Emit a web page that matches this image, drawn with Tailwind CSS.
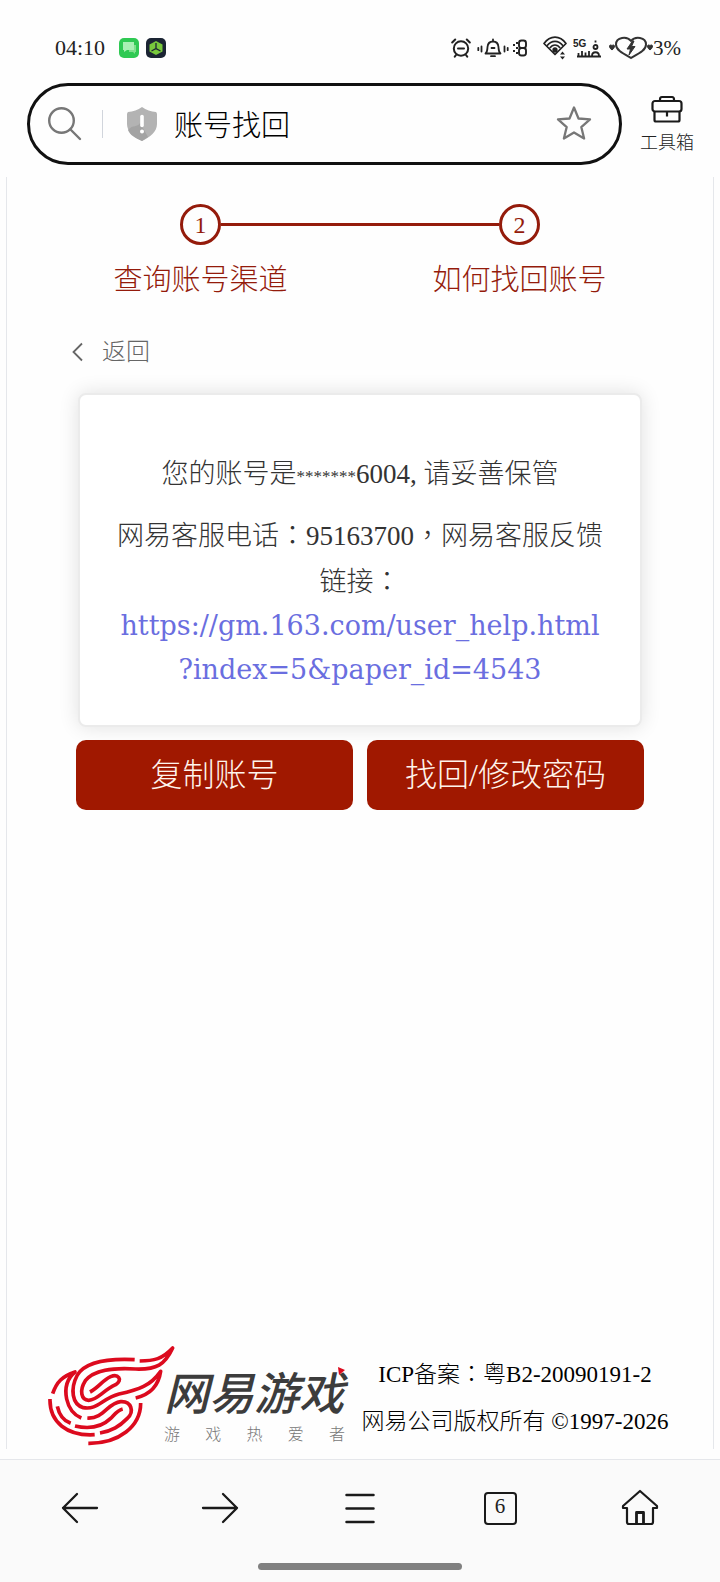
<!DOCTYPE html>
<html lang="zh-CN">
<head>
  <meta charset="UTF-8" />
  <meta name="viewport" content="width=device-width, initial-scale=1.0" />
  <title>账号找回</title>
  <script src="https://cdn.jsdelivr.net/npm/@tailwindcss/browser@4"></script>
</head>
<body class="bg-[#fefefe] text-[#222] font-['Liberation_Serif','Noto_Sans_CJK_SC',serif] font-light min-h-screen flex flex-col">

  <!-- Status bar -->
  <div class="flex items-center justify-between h-7 mt-[34px] pl-[55px] pr-[39px] text-[22px] leading-7">
    <div class="flex items-center">
      <span>04:10</span>
      <svg class="ml-3.5 size-5" viewBox="0 0 20 20">
        <rect width="20" height="20" rx="5" fill="#2fc953" />
        <path d="M4 4h11v8H8l-3 2v-2H4z" fill="#a9f0b4" />
        <path d="M10 12h5V7h2v7h-1v2l-2-2h-4z" fill="#7fe08d" />
      </svg>
      <svg class="ml-[7px] size-5" viewBox="0 0 20 20">
        <rect width="20" height="20" rx="5" fill="#1b2433" />
        <path d="M10 3l6.500 3.500v7L10 17l-6.500-3.500v-7z" fill="#78c83c" />
        <path d="M10 5v5.500l4.500 2.500M10 10.500L5.500 13" fill="none" stroke="#1b2433" stroke-width="1.300" />
      </svg>
    </div>
    <div class="flex items-center text-[21px]">
      <!-- alarm -->
      <svg class="w-5 h-5" viewBox="0 0 20 20" fill="none" stroke="#222" stroke-width="2" stroke-linecap="round">
        <circle cx="10" cy="10.500" r="7.200" />
        <path d="M7 10.500h6M1.200 4.500l3-3M18.800 4.500l-3-3M5 17l-1.200 1.700M15 17l1.200 1.700" />
      </svg>
      <!-- bell -->
      <svg class="ml-1.5 w-8 h-5" viewBox="0 0 32 20" fill="none" stroke="#222" stroke-width="1.800" stroke-linecap="round" stroke-linejoin="round">
        <path d="M8.500 15.500c2-1.500 1.800-4 2-6.500.3-3.500 2.500-5.500 5.500-5.500s5.200 2 5.500 5.500c.2 2.500 0 5 2 6.500zM16 1.500v1.500M14 18.200h4M14.500 10h3M4.500 8.500v5M1.300 9.800v2.400M27.500 8.500v5M30.700 9.800v2.400" />
      </svg>
      <!-- vibrate -->
      <svg class="ml-1 w-3.5 h-5" viewBox="0 0 14 20" fill="none" stroke="#222" stroke-width="1.900">
        <rect x="6" y="2.500" width="7" height="7.500" rx="2.500" />
        <rect x="6" y="10" width="7" height="7.500" rx="2.500" />
        <path d="M0 7h2M3 5h2M3 10h2M0 13h2M3 15h2" />
      </svg>
      <!-- wifi -->
      <svg class="ml-4 w-6 h-6" viewBox="0 0 24 24" fill="none" stroke="#222" stroke-width="1.700" stroke-linejoin="round">
        <path d="M1 7.500C7-1 17-1 23 7.500L12 18.500z" />
        <path d="M4 9.800c4.500-6 11.500-6 16 0M6.800 12c3-4 7.400-4 10.400 0" />
        <circle cx="12" cy="14" r="1.800" fill="#222" />
        <path d="M17 18.500h5l-2.500-3zM17 20.500h5l-2.500 3z" fill="#222" stroke="none" />
      </svg>
      <!-- 5G signal -->
      <svg class="ml-1.5 w-7 h-5" viewBox="0 0 28 20" fill="none" stroke="#222" stroke-width="1.800">
        <text x="0" y="9" font-family="Liberation Sans" font-size="10" font-weight="bold" fill="#222" stroke="none">5G</text>
        <path d="M4 18.500h24M5.500 18v-3M9 18v-5M12.500 18v-3.500M16 18v-5M19 18c0-5 7-5 7 0" />
        <circle cx="22.500" cy="9" r="2" />
        <path d="M22.500 2.500v2" />
      </svg>
      <!-- heart battery -->
      <svg class="ml-2 w-11 h-6" viewBox="0 0 44 24">
        <path d="M22 22C13 17 7 14 7 8.500 7 1 18 0 22 5c4-5 15-4 15 3.500C37 14 31 17 22 22z" fill="none" stroke="#333" stroke-width="2" />
        <path d="M23.500 5L18 13h3.500L20 19l6-8.500h-3.500L25 5z" fill="#333" stroke="#333" />
        <path d="M3 14C0 12 0 9 1.500 9S3 10 3 10s0-1 1.500-1S6 12 3 14zM41 14c-3-2-3-5-1.500-5S41 10 41 10s0-1 1.500-1 1.500 3-1.500 5z" fill="#333" stroke="#333" />
      </svg>
      <span>3%</span>
    </div>
  </div>

  <!-- Address bar -->
  <header class="flex items-center mt-[21px] pl-[27px] pr-[26px]">
    <div class="flex-1 flex items-center h-[82px] border-3 border-[#111] rounded-full pl-[18px] pr-[27px]">
      <button type="button" aria-label="搜索">
        <svg class="w-[34px] h-[34px]" viewBox="0 0 34 34" fill="none" stroke="#777" stroke-width="2.400" stroke-linecap="round">
          <circle cx="13.500" cy="13.500" r="12.300" />
          <path d="M22.500 22.500L32 32" />
        </svg>
      </button>
      <span class="w-px h-7 ml-5 bg-gray-300"></span>
      <svg class="ml-[23px] w-8 h-9" viewBox="0 0 32 36">
        <path d="M16 1c4 3 9 4.500 14 5 1 1 1 2 1 3v9c0 8-7 13-15 17C8 31 1 26 1 18V9c0-1 0-2 1-3 5-.5 10-2 14-5z" fill="#b3b3b3" />
        <path d="M2 24c5-6 9-2 12-7l8 14-6 4c-7-3-12-6-14-11z" fill="#a3a3a3" />
        <path d="M16 10.500v9" stroke="#fff" stroke-width="3.600" stroke-linecap="round" />
        <circle cx="16" cy="25.500" r="2" fill="#fff" />
      </svg>
      <input type="text" aria-label="地址栏" value="账号找回" class="flex-1 min-w-0 mt-1 ml-4 text-[29px] leading-10 text-black outline-none" />
      <button type="button" aria-label="收藏">
        <svg class="w-9 h-9" viewBox="0 0 36 36" fill="none" stroke="#777" stroke-width="2.300" stroke-linejoin="round">
          <path d="M18 1.500l4.500 11 11.500.8-8.700 7.800 2.800 11.400L18 26.500l-10.100 6 2.800-11.400L2 13.300l11.500-.8z" />
        </svg>
      </button>
    </div>
    <button type="button" class="flex flex-col items-center mt-0.5 ml-[18px] text-[18px] leading-6">
      <svg class="w-8 h-7 mb-2" viewBox="0 0 32 28" fill="none" stroke="#1a1a1a" stroke-width="2.200" stroke-linejoin="round">
        <path d="M9 6V4.500C9 3 9.500 2 11 2h10c1.500 0 2 1 2 2.500V6" />
        <rect x="1.500" y="6" width="29" height="10.500" rx="2.500" />
        <path d="M3.500 16.500V25c0 1 .5 1.500 1.500 1.500h22c1 0 1.500-.5 1.500-1.500v-8.500M16 16.500v5" />
      </svg>
      工具箱
    </button>
  </header>

  <!-- Page -->
  <main class="flex-1 flex flex-col mt-3 mx-1.5 mb-2.5 border-x border-gray-200">
    <ol class="grid grid-cols-2 mt-[27px] px-[34px] text-[29px] leading-10 text-[#941b0b]">
      <li class="flex flex-col items-center">
        <div class="flex items-center w-full">
          <span class="flex-1"></span>
          <span class="size-[41px] flex items-center justify-center border-3 border-[#941b0b] rounded-full text-2xl">1</span>
          <span class="flex-1 h-[3px] bg-[#941b0b]"></span>
        </div>
        <span class="mt-[15px]">查询账号渠道</span>
      </li>
      <li class="flex flex-col items-center">
        <div class="flex items-center w-full">
          <span class="flex-1 h-[3px] bg-[#941b0b]"></span>
          <span class="size-[41px] flex items-center justify-center border-3 border-[#941b0b] rounded-full text-2xl">2</span>
          <span class="flex-1"></span>
        </div>
        <span class="mt-[15px]">如何找回账号</span>
      </li>
    </ol>

    <a href="#" class="self-start flex items-center mt-9 ml-[65px] text-2xl leading-8 text-[#666]">
      <svg class="w-3 h-5 mr-[18px]" viewBox="0 0 12 20" fill="none" stroke="#666" stroke-width="1.800">
        <path d="M10 1.500L1.500 10l8.500 8.500" />
      </svg>
      返回
    </a>

    <section class="mt-[25px] mx-[71px] border-2 border-[#ebebeb] rounded-lg bg-white shadow-[0_0_20px_rgba(0,0,0,0.12)] px-[35px] pt-[57px] pb-[33px] text-center text-[27px] leading-[44px] text-[#333]">
      <p>您的账号是<span class="text-[17px] leading-none align-middle">*******</span>6004, 请妥善保管</p>
      <p class="mt-4">网易客服电话<span lang="zh-TW" class="font-['Noto_Sans_CJK_TC']">：</span>95163700<span lang="zh-TW" class="font-['Noto_Sans_CJK_TC']">，</span>网易客服反馈链接<span lang="zh-TW" class="font-['Noto_Sans_CJK_TC']">：</span><br /><a href="https://gm.163.com/user_help.html?index=5&amp;paper_id=4543" class="font-['DejaVu_Serif',serif] text-[#6a6ee0]">https://gm.163.com/user_help.html<wbr />?index=5&amp;paper_id=4543</a></p>
    </section>

    <div class="grid grid-cols-2 gap-3.5 mt-[13px] mx-[69px] text-[32px] text-[#fff4ec]">
      <button type="button" class="h-[70px] rounded-[10px] bg-[#a01800]">复制账号</button>
      <button type="button" class="h-[70px] rounded-[10px] bg-[#a01800]">找回/修改密码</button>
    </div>

    <footer class="mt-auto -mb-0.5 flex items-center pl-[41px] pr-7 text-black">
      <svg class="w-[132px] h-[108px] mt-1 -mr-4" viewBox="12 12 396 324" fill="none" stroke="#dc0a1e" stroke-width="11" stroke-linejoin="round">
        <path d="M272 62C190 58 125 68 100 108C78 150 84 196 118 206C160 214 175 178 225 165C285 152 320 140 350 97C343 145 315 168 275 177" />
        <path d="M287 66C330 66 355 60 386 27C362 78 338 92 275 90C205 86 150 92 124 125C105 155 112 183 134 184C162 183 175 155 215 137C238 122 222 104 200 113C175 124 165 145 138 159" />
        <path d="M26 164C38 128 55 112 93 99C65 122 62 150 68 180C75 212 90 228 112 237" />
        <path d="M130 237C180 240 190 192 230 188C262 186 272 218 250 238C226 262 205 276 168 282" />
        <path d="M93 261C140 272 175 262 200 238C212 226 220 214 236 210" />
        <path d="M40 202C46 230 58 245 80 253" />
        <path d="M18 180C16 250 70 292 152 287" />
        <path d="M290 192C290 262 225 314 133 313" />
      </svg>
      <div class="w-[181px] shrink-0 mt-5 font-['Noto_Sans_CJK_SC',sans-serif] text-[#3c3c3c]">
        <div class="relative text-[45px] leading-[56px] font-medium italic whitespace-nowrap">
          网易游戏
          <svg class="absolute right-0 top-1 size-2" viewBox="0 0 8 8"><path d="M1 0l7 3-6 5z" fill="#dc0a1e" /></svg>
        </div>
        <div class="flex justify-between text-base leading-7 text-[#777]">
          <span>游</span><span>戏</span><span>热</span><span>爱</span><span>者</span>
        </div>
      </div>
      <div class="flex-1 mt-1 text-center text-[23px] leading-[47px] whitespace-nowrap">
        <p>ICP备案<span lang="zh-TW" class="font-['Noto_Sans_CJK_TC']">：</span>粤B2-20090191-2</p>
        <p>网易公司版权所有 ©1997-2026</p>
      </div>
    </footer>
  </main>

  <!-- Bottom navigation -->
  <nav class="h-[123px] border-t border-gray-200 bg-[#fafafa] flex flex-col justify-between">
    <div class="grid grid-cols-5 justify-items-center items-center px-2.5 pt-7">
      <button type="button" aria-label="后退">
        <svg class="size-10" viewBox="0 0 40 40" fill="none" stroke="#1a1a1a" stroke-width="2.300" stroke-linecap="round" stroke-linejoin="round"><path d="M37 20H3M17 6L3 20l14 14" /></svg>
      </button>
      <button type="button" aria-label="前进">
        <svg class="size-10" viewBox="0 0 40 40" fill="none" stroke="#1a1a1a" stroke-width="2.300" stroke-linecap="round" stroke-linejoin="round"><path d="M3 20h34M23 6l14 14-14 14" /></svg>
      </button>
      <button type="button" aria-label="菜单">
        <svg class="size-10" viewBox="0 0 40 40" fill="none" stroke="#1a1a1a" stroke-width="2.500" stroke-linecap="round"><path d="M6.500 7h27M6.500 20.500h27M6.500 34h27" /></svg>
      </button>
      <button type="button" aria-label="标签页" class="w-[33px] h-[33px] border-2 border-[#1a1a1a] rounded-sm text-[21px] leading-6 pb-1">6</button>
      <button type="button" aria-label="主页">
        <svg class="size-10" viewBox="0 0 40 40" fill="none" stroke="#1a1a1a" stroke-width="2.200" stroke-linejoin="round">
          <path d="M7 20H3v-2L20 3l17 15v2h-4v14c0 1-.5 2-2 2H9c-1.500 0-2-1-2-2z" />
          <path d="M16.500 36V24.500h7V36" stroke-width="2.800" />
        </svg>
      </button>
    </div>
    <div class="w-[204px] h-[7px] mb-3 self-center rounded-full bg-[#808080]"></div>
  </nav>
</body>
</html>
